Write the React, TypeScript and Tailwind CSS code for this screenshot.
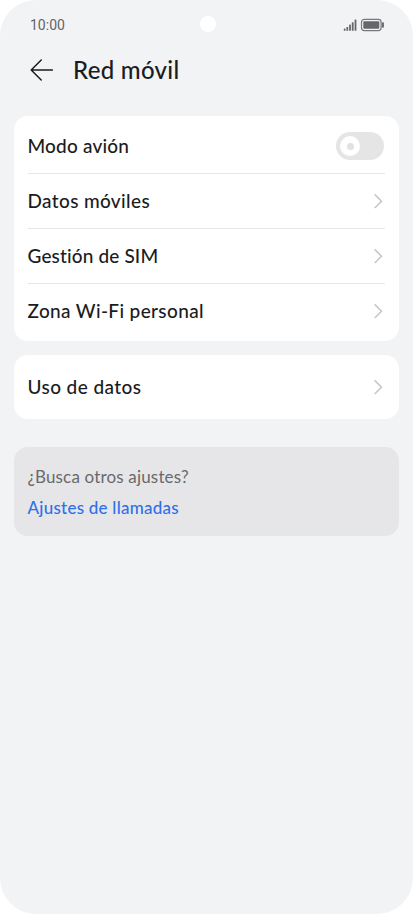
import React from "react";

function Chevron() {
  return (
    <svg className="mr-[2px] block" width="9" height="15" viewBox="0 0 9 15" fill="none" stroke="#c6c6c8" strokeWidth="1.6" strokeLinecap="round" strokeLinejoin="round">
      <path d="M1.2 0.9 7.5 7.2 1.2 13.5" />
    </svg>
  );
}

function Toggle() {
  return (
    <div role="switch" aria-checked="false" className="flex h-[28px] w-[48px] items-center rounded-full bg-[#e5e5e5] pl-1">
      <div className="flex size-[20px] items-center justify-center rounded-full bg-white">
        <div className="size-[7px] rounded-full bg-[#e2e2e2]" />
      </div>
    </div>
  );
}

type RowProps = { label: string; spacing: string; height: string; line?: boolean; children: React.ReactNode };

function Row({ label, spacing, height, line, children }: RowProps) {
  return (
    <div className={`mx-[14px] flex items-center justify-between ${height} ${line ? "border-b border-[#e7e7e8]" : ""}`}>
      <span className={`-ml-[0.5px] whitespace-nowrap text-[19px] leading-6 font-medium text-[#1b1c1e] ${spacing}`}>{label}</span>
      {children}
    </div>
  );
}

export default function App() {
  return (
    <div className="h-[914px] w-[413px] bg-white font-['Lato','Open_Sans',sans-serif]">
      <main className="flex h-full flex-col overflow-hidden rounded-[36px] bg-[#f2f3f5]">
        <div className="flex h-12 items-center pr-[28px] pl-[30px]">
          <span className="w-[170px] pt-px font-['Roboto',sans-serif] text-[14px] leading-5 text-[#626366]">10:00</span>
          <div className="size-4 rounded-full bg-white" />
          <svg className="mt-px ml-auto" width="42" height="14" viewBox="0 0 42 14">
            <g fill="#66676a">
              <rect x="0.8" y="10.6" width="1.7" height="2.2" rx=".5" />
              <rect x="3.4" y="9" width="1.8" height="3.8" rx=".5" />
              <rect x="6.1" y="6.6" width="1.8" height="6.2" rx=".5" />
              <rect x="8.8" y="4.2" width="1.8" height="8.6" rx=".5" />
              <rect x="11.6" y="1.6" width="1.8" height="11.2" rx=".5" />
              <rect x="20.3" y="3.2" width="16" height="7.6" rx="1" />
              <rect x="38.9" y="4.2" width="2" height="5.6" rx=".8" />
            </g>
            <rect x="18.5" y="1.4" width="19.6" height="11.2" rx="2.8" fill="none" stroke="#77787a" strokeWidth="1.2" />
          </svg>
        </div>

        <header className="flex h-11 items-center pl-[30px]">
          <svg className="block" width="24" height="24" viewBox="0 0 24 24" fill="none" stroke="#1b1c1e" strokeWidth="1.5" strokeLinecap="round" strokeLinejoin="round">
            <path d="M22.4 12H1.2M11.2 2 1.2 12l10 10" />
          </svg>
          <h1 className="ml-[19px] whitespace-nowrap text-[24px] leading-8 font-medium tracking-[0.3px] text-[#1b1c1e]">Red móvil</h1>
        </header>

        <section className="mx-[14px] mt-6 h-[225px] rounded-[14px] bg-white">
          <Row label="Modo avión" spacing="pt-[3px] tracking-[0.18px]" height="h-[58px]" line>
            <div className="mt-[3px] mr-px"><Toggle /></div>
          </Row>
          <Row label="Datos móviles" spacing="tracking-[0.36px]" height="h-[55px]" line><Chevron /></Row>
          <Row label="Gestión de SIM" spacing="tracking-[0.14px]" height="h-[55px]" line><Chevron /></Row>
          <Row label="Zona Wi-Fi personal" spacing="tracking-[0.37px]" height="h-[54px]"><Chevron /></Row>
        </section>

        <section className="mx-[14px] mt-[14px] rounded-[14px] bg-white">
          <Row label="Uso de datos" spacing="tracking-[0.42px]" height="h-[64px]"><Chevron /></Row>
        </section>

        <section className="mx-[14px] mt-7 h-[89px] rounded-[14px] bg-[#e6e6e8] px-[14px] pt-[18px]">
          <p className="-ml-[0.5px] whitespace-nowrap text-[17px] leading-6 tracking-[0.17px] text-[#68696c]">¿Busca otros ajustes?</p>
          <a className="-ml-[0.5px] mt-[7px] block w-fit whitespace-nowrap text-[17px] leading-6 font-medium tracking-[0.24px] text-[#2f70e8]">Ajustes de llamadas</a>
        </section>
      </main>
    </div>
  );
}
